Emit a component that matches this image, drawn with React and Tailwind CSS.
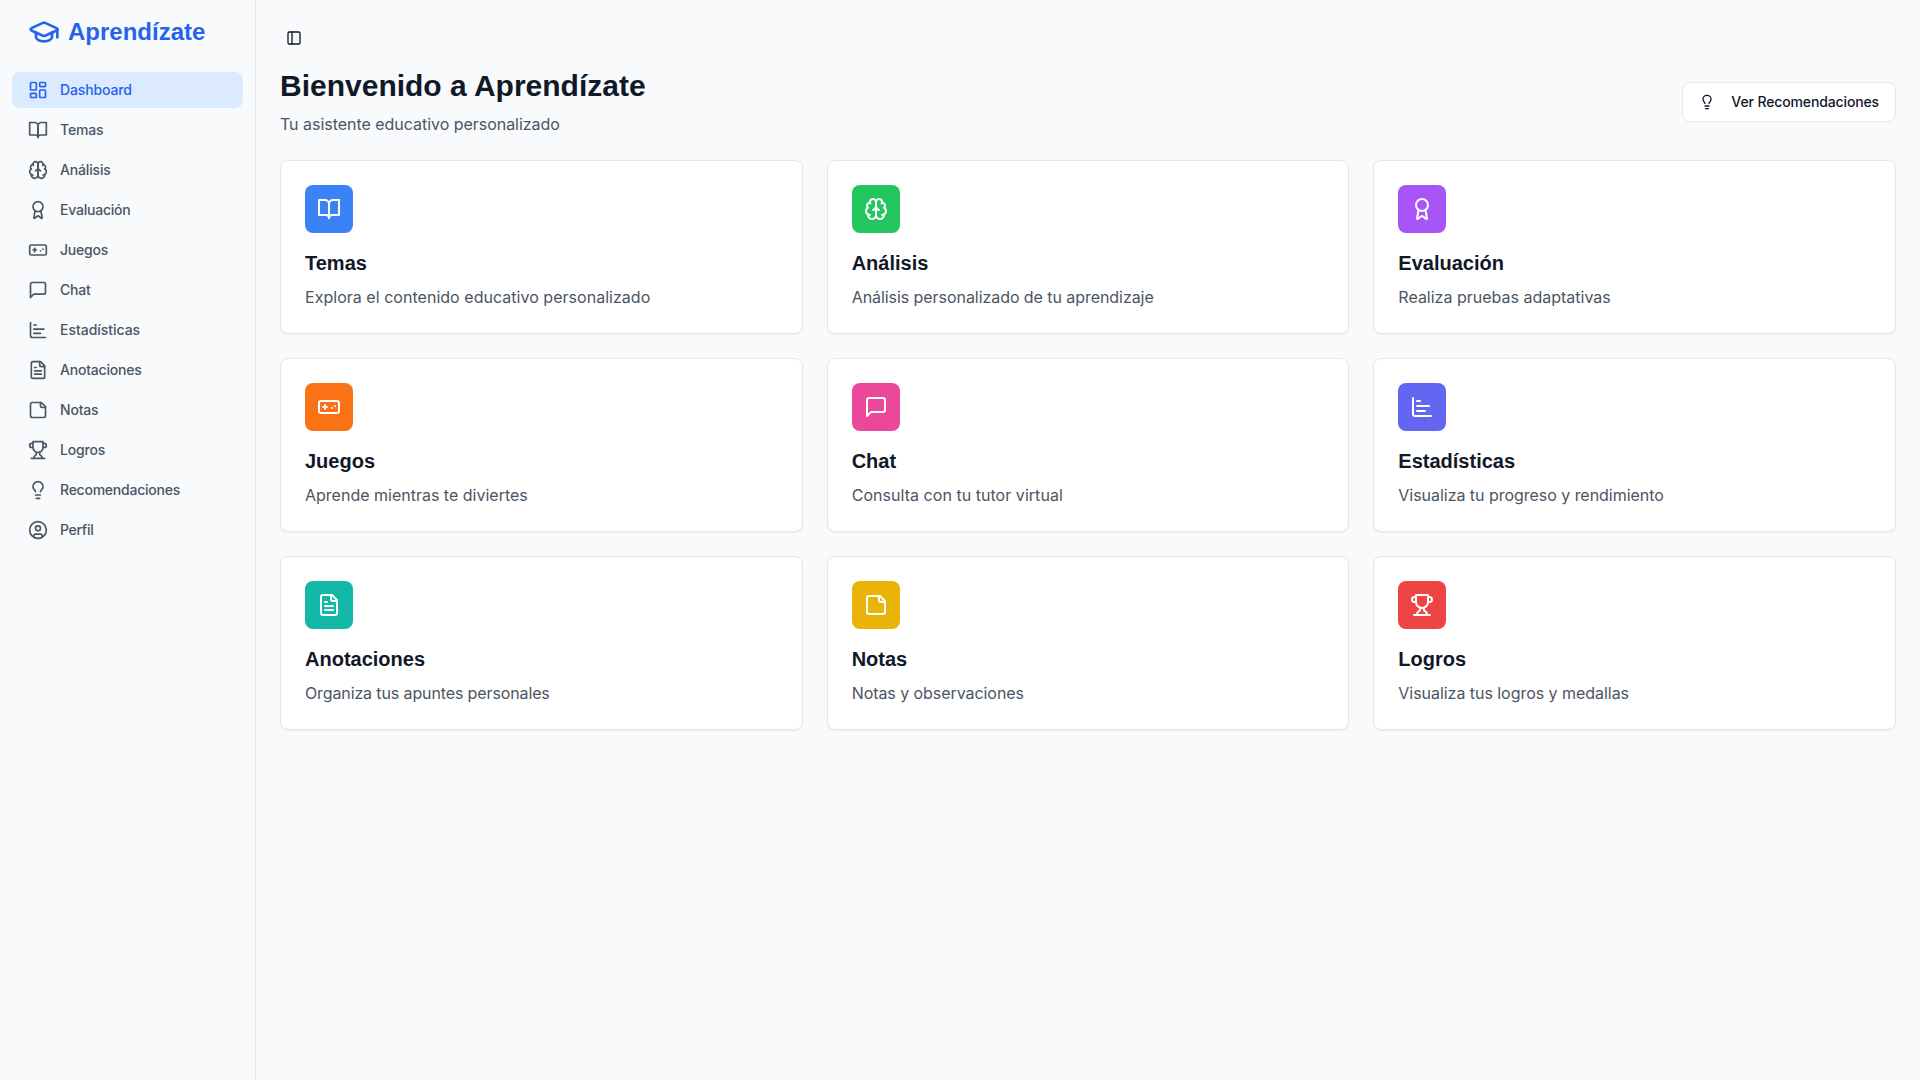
import React from "react";
import { LayoutDashboard, Award, Gamepad, ChartBar, Lightbulb, CircleUser, PanelLeft, GraduationCap } from "lucide-react";

const svgProps = {
  xmlns: "http://www.w3.org/2000/svg",
  viewBox: "0 0 24 24",
  fill: "none",
  stroke: "currentColor",
  strokeWidth: 2,
  strokeLinecap: "round",
  strokeLinejoin: "round",
};

function BookOpen({ className }) {
  return (
    <svg {...svgProps} className={className}>
      <path d="M2 3h6a4 4 0 0 1 4 4v14a3 3 0 0 0-3-3H2z" />
      <path d="M22 3h-6a4 4 0 0 0-4 4v14a3 3 0 0 1 3-3h7z" />
    </svg>
  );
}

function Brain({ className }) {
  return (
    <svg {...svgProps} className={className}>
      <path d="M12 5a3 3 0 1 0-5.997.125 4 4 0 0 0-2.526 5.77 4 4 0 0 0 .556 6.588A4 4 0 1 0 12 18Z" />
      <path d="M12 5a3 3 0 1 1 5.997.125 4 4 0 0 1 2.526 5.77 4 4 0 0 1-.556 6.588A4 4 0 1 1 12 18Z" />
      <path d="M15 13a4.5 4.5 0 0 1-3-4 4.5 4.5 0 0 1-3 4" />
      <path d="M17.599 6.5a3 3 0 0 0 .399-1.375" />
      <path d="M6.003 5.125A3 3 0 0 0 6.401 6.5" />
      <path d="M3.477 10.896a4 4 0 0 1 .585-.396" />
      <path d="M19.938 10.5a4 4 0 0 1 .585.396" />
      <path d="M6 18a4 4 0 0 1-1.967-.516" />
      <path d="M19.967 17.484A4 4 0 0 1 18 18" />
    </svg>
  );
}

function MessageSquare({ className }) {
  return (
    <svg {...svgProps} className={className}>
      <path d="M21 15a2 2 0 0 1-2 2H7l-4 4V5a2 2 0 0 1 2-2h14a2 2 0 0 1 2 2z" />
    </svg>
  );
}

function FileText({ className }) {
  return (
    <svg {...svgProps} className={className}>
      <path d="M15 2H6a2 2 0 0 0-2 2v16a2 2 0 0 0 2 2h12a2 2 0 0 0 2-2V7Z" />
      <path d="M14 2v4a2 2 0 0 0 2 2h4" />
      <path d="M10 9H8" />
      <path d="M16 13H8" />
      <path d="M16 17H8" />
    </svg>
  );
}

function StickyNote({ className }) {
  return (
    <svg {...svgProps} className={className}>
      <path d="M16 3H5a2 2 0 0 0-2 2v14a2 2 0 0 0 2 2h14a2 2 0 0 0 2-2V8Z" />
      <path d="M15 3v4a2 2 0 0 0 2 2h4" />
    </svg>
  );
}

function Trophy({ className }) {
  return (
    <svg {...svgProps} className={className}>
      <path d="M6 9H4.5a2.5 2.5 0 0 1 0-5H6" />
      <path d="M18 9h1.5a2.5 2.5 0 0 0 0-5H18" />
      <path d="M4 22h16" />
      <path d="M10 14.66V17c0 .55-.47.98-.97 1.21C7.85 18.75 7 20.24 7 22" />
      <path d="M14 14.66V17c0 .55.47.98.97 1.21C16.15 18.75 17 20.24 17 22" />
      <path d="M18 2H6v7a6 6 0 0 0 12 0V2Z" />
    </svg>
  );
}

const nav = [
  [LayoutDashboard, "Dashboard", "tracking-[-0.13px]"],
  [BookOpen, "Temas", "tracking-[-0.15px]"],
  [Brain, "Análisis", "tracking-[-0.15px]"],
  [Award, "Evaluación", "tracking-[-0.22px]"],
  [Gamepad, "Juegos", "tracking-[-0.2px]"],
  [MessageSquare, "Chat", "tracking-[-0.2px]"],
  [ChartBar, "Estadísticas", "tracking-[-0.03px]"],
  [FileText, "Anotaciones", "tracking-[-0.2px]"],
  [StickyNote, "Notas", "tracking-[-0.2px]"],
  [Trophy, "Logros", "tracking-[-0.2px]"],
  [Lightbulb, "Recomendaciones", "tracking-[-0.24px]"],
  [CircleUser, "Perfil", "tracking-[-0.3px]"],
];

const cards = [
  [BookOpen, "Temas", "Explora el contenido educativo personalizado", "bg-[#3b82f6]", "tracking-[0.03px]"],
  [Brain, "Análisis", "Análisis personalizado de tu aprendizaje", "bg-[#22c55e]", "tracking-[-0.06px]"],
  [Award, "Evaluación", "Realiza pruebas adaptativas", "bg-[#a855f7]", ""],
  [Gamepad, "Juegos", "Aprende mientras te diviertes", "bg-[#f97316]", ""],
  [MessageSquare, "Chat", "Consulta con tu tutor virtual", "bg-[#ec4899]", "tracking-[0.04px]"],
  [ChartBar, "Estadísticas", "Visualiza tu progreso y rendimiento", "bg-[#6366f1]", "tracking-[-0.035px]"],
  [FileText, "Anotaciones", "Organiza tus apuntes personales", "bg-[#14b8a6]", "tracking-[-0.12px]"],
  [StickyNote, "Notas", "Notas y observaciones", "bg-[#eab308]", "tracking-[-0.06px]"],
  [Trophy, "Logros", "Visualiza tus logros y medallas", "bg-[#ef4444]", "tracking-[-0.04px]"],
];

export default function App() {
  return (
    <div className="flex min-h-[1080px] bg-[#f8fafc] font-['Inter',sans-serif] text-[#111827]">
      <aside className="flex w-64 shrink-0 flex-col border-r border-[#e2e8f0] bg-[#f8fafc]">
        <div className="flex h-[64px] items-center gap-2 px-7">
          <GraduationCap className="size-8 text-[#2563eb]" />
          <span className="font-['Liberation_Sans',sans-serif] text-2xl font-bold text-[#2563eb]">Aprendízate</span>
        </div>
        <nav className="mt-2 flex flex-col gap-1 px-3">
          {nav.map(([Icon, label, track], i) => (
            <a
              key={label}
              className={
                (i === 0
                  ? "flex h-9 items-center gap-3 rounded-lg bg-[#dbeafe] px-4 text-sm font-medium text-[#2563eb] "
                  : "flex h-9 items-center gap-3 rounded-lg px-4 text-sm font-medium text-[#4b5563] ") + track
              }
            >
              <Icon className="size-5" />
              <span>{label}</span>
            </a>
          ))}
        </nav>
      </aside>
      <main className="flex-1 p-6">
        <button className="mb-4 flex size-7 items-center justify-center text-[#0f172a]">
          <PanelLeft className="size-4" />
        </button>
        <div className="mb-6 flex items-center justify-between">
          <div>
            <h1 className="font-['Liberation_Sans',sans-serif] text-3xl font-bold text-[#111827]">Bienvenido a Aprendízate</h1>
            <p className="mt-2 text-base tracking-[-0.03px] text-[#4b5563]">Tu asistente educativo personalizado</p>
          </div>
          <button className="flex h-10 items-center gap-2 rounded-lg border border-[#e2e8f0] bg-white px-4 text-sm font-medium tracking-[-0.13px] text-[#0f172a]">
            <Lightbulb className="mr-2 size-4" />
            Ver Recomendaciones
          </button>
        </div>
        <div className="grid grid-cols-3 gap-6">
          {cards.map(([Icon, title, desc, color, track]) => (
            <div key={title} className="rounded-lg border border-[#e2e8f0] bg-white p-6 shadow-[0_1px_2px_0_rgba(0,0,0,0.05)]">
              <div className={"mb-4 flex size-12 items-center justify-center rounded-lg text-white " + color}>
                <Icon className="size-6" />
              </div>
              <h3 className="mb-2 font-['Liberation_Sans',sans-serif] text-xl font-semibold text-[#111827]">{title}</h3>
              <p className={"text-base text-[#4b5563] " + track}>{desc}</p>
            </div>
          ))}
        </div>
      </main>
    </div>
  );
}
